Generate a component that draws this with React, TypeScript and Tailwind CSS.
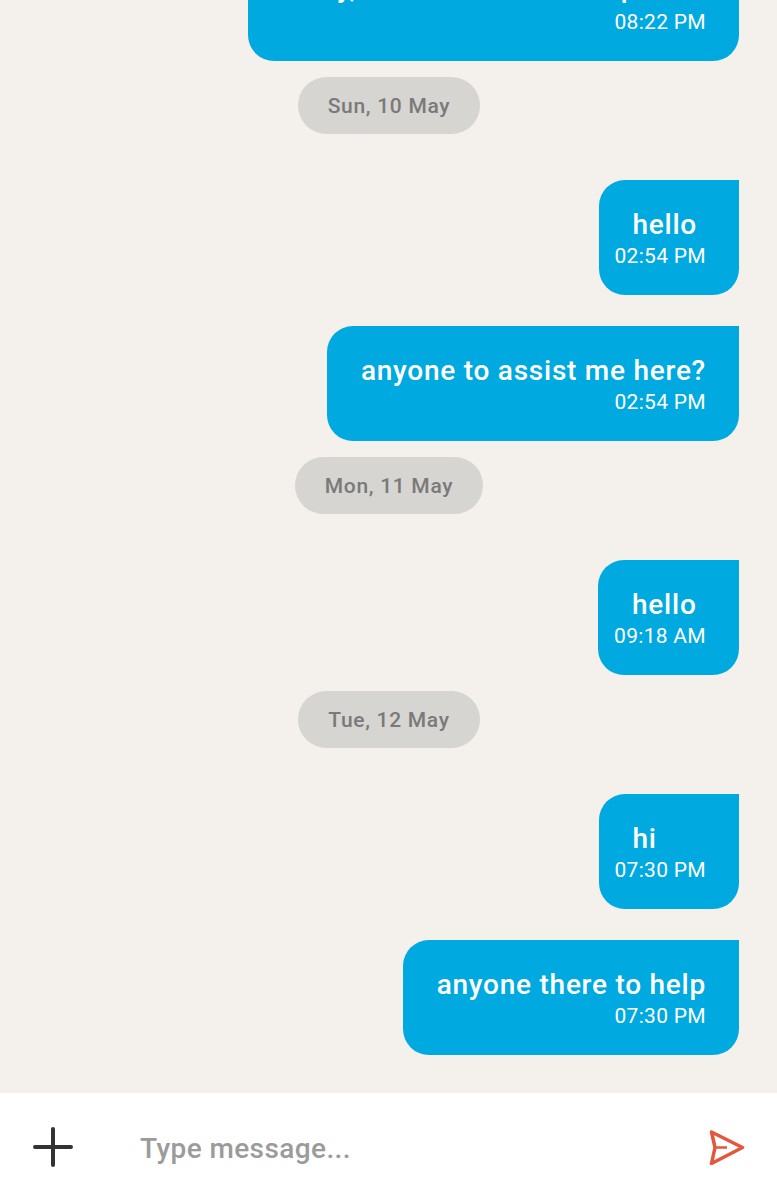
import React from 'react';

const font = "font-['Roboto',sans-serif]";

const Bubble = ({ text, time }: { text: string; time: string }) => (
    <div className="self-end mr-[38px] bg-[#00a9e0] rounded-[26px] rounded-tr-none pl-[16px] pr-[33px] pt-[29px] h-[115px] shrink-0 flex flex-col">
        <p className="ml-[18px] text-[28px] leading-[31px] font-medium tracking-[0.75px] text-white text-left">{text}</p>
        <p className="text-[21px] leading-[33px] tracking-[0.3px] text-white text-right">{time}</p>
    </div>
);

const DatePill = ({ label }: { label: string }) => (
    <div className="self-center ml-[1px] h-[57px] shrink-0 rounded-full bg-[#d6d5d2] px-[30px] pt-[2px] flex items-center text-[21px] font-medium tracking-[0.7px] text-[#7a7a7a]">
        {label}
    </div>
);

const App = () => {
    return (
        <div className={`w-[777px] h-[1200px] flex flex-col bg-[#f4f1ed] overflow-hidden ${font}`}>
            <div className="flex-1 min-h-0 flex flex-col justify-end pb-[38px]">
                <div className="self-end mr-[38px] w-[491px] h-[115px] shrink-0 bg-[#00a9e0] rounded-b-[26px] rounded-tl-[26px] pl-[34px] pr-[33px] pt-[26px]">
                    <p className="text-[28px] leading-[31px] font-medium tracking-[0.75px] text-white text-right whitespace-nowrap">to try, how could i do this please</p>
                    <p className="mt-[3px] text-[21px] leading-[33px] tracking-[0.3px] text-white text-right">08:22 PM</p>
                </div>
                <div className="h-[16px] shrink-0" />
                <DatePill label="Sun, 10 May" />
                <div className="h-[46px] shrink-0" />
                <Bubble text="hello" time="02:54 PM" />
                <div className="h-[31px] shrink-0" />
                <Bubble text="anyone to assist me here?" time="02:54 PM" />
                <div className="h-[16px] shrink-0" />
                <DatePill label="Mon, 11 May" />
                <div className="h-[46px] shrink-0" />
                <Bubble text="hello" time="09:18 AM" />
                <div className="h-[16px] shrink-0" />
                <DatePill label="Tue, 12 May" />
                <div className="h-[46px] shrink-0" />
                <Bubble text="hi" time="07:30 PM" />
                <div className="h-[31px] shrink-0" />
                <Bubble text="anyone there to help" time="07:30 PM" />
            </div>
            <div className="h-[107px] shrink-0 bg-white flex items-center pl-[33px] pr-[32px]">
                <svg width="40" height="40" viewBox="0 0 40 40" className="shrink-0">
                    <path d="M20 2v36M2 20h36" stroke="#333333" strokeWidth="4" strokeLinecap="round" fill="none" />
                </svg>
                <span className="ml-[67px] pt-[4px] flex-1 text-[28px] font-medium tracking-[0.4px] text-[#9b9b9b]">Type message...</span>
                <svg width="36" height="36" viewBox="0 0 36 36" className="shrink-0">
                    <path d="M2.5 3L33.5 18.5L2.5 34.5L6 18.5Z" stroke="#e5573a" strokeWidth="3.5" strokeLinejoin="round" fill="none" />
                    <path d="M6 18.5H18" stroke="#e5573a" strokeWidth="2.5" fill="none" />
                </svg>
            </div>
        </div>
    );
};

export default App;
